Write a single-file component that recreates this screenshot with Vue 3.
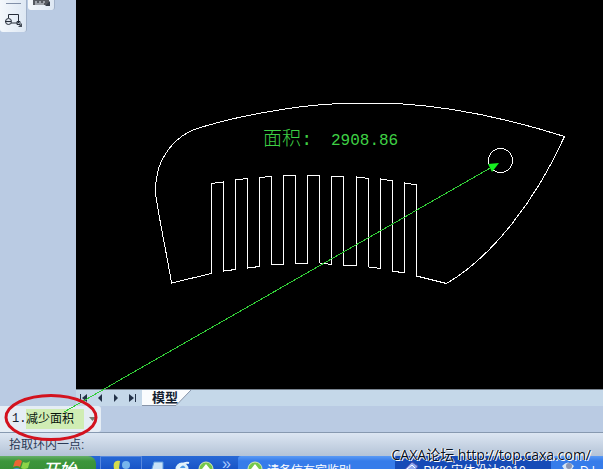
<script setup>
const navButtons = [
  { label: 'First sheet', bar: 3, arrow: '10,3 10,11 5,7' },
  { label: 'Previous sheet', bar: null, arrow: '9,3 9,11 5,7' },
  { label: 'Next sheet', bar: null, arrow: '5,3 5,11 9,7' },
  { label: 'Last sheet', bar: 10, arrow: '4,3 4,11 9,7' },
]

// Comb outline: left end, upper back, right edge, then the teeth from right to left.
const outline =
  'M171.5 283 C168 260 160 225 155.5 193 C155 182 157 175 159 167 C166 149 177 137 193 130 ' +
  'C231 117 295 105 341 103.5 H397 C440 106 500 116 564.5 136.5 ' +
  'C536 200 492 257 446.5 283.5 L416.5 276 V185 L404.5 183 V273 L392.5 271 V181 L380.5 179 V268.5 ' +
  'L368.5 267 V178.5 L356.5 177 V265.5 H343.5 V176.5 H331.5 V264.5 L319.5 263 V175.5 H307.5 V263.5 H295.5 V175.5 ' +
  'L283.5 176 V264.5 L271.5 265 V176.5 L259.5 177.5 V266.5 L247.5 268 V178.5 L235.5 180 V269.5 L223.5 271 V182 ' +
  'L211.5 183.5 V273.5 Z'
</script>

<template>
  <main class="app">
    <div class="workspace">
      <aside class="sidebar">
        <div class="toolbox">
          <hr class="divider" />
          <button class="tool" aria-label="Block tool">
            <svg width="24" height="18" viewBox="0 0 24 18">
              <path d="M8.5 8V4.5h10V13H11" fill="none" stroke="#252c38" />
              <circle cx="8.5" cy="11.5" r="3" fill="#dce3ec" stroke="#252c38" />
              <path d="M5 11.5h6M17 11.5h3v3h-3z" fill="none" stroke="#252c38" />
              <path d="M22 13v4h-4z" fill="#454c57" />
            </svg>
          </button>
        </div>
        <div class="toolbox small">
          <button class="tool" aria-label="Dimension tool">
            <svg width="20" height="8" viewBox="0 0 20 8">
              <path d="M1 0h16v5H1z" fill="#555960" />
              <path d="M3 2h2M7 2h2M11 2h2M3 4h9" stroke="#e7edf4" />
              <path d="M18 1v5h-5z" fill="#343b46" />
            </svg>
          </button>
        </div>
      </aside>
      <section class="canvas">
        <svg class="drawing" width="527" height="389" viewBox="76 0 527 389">
          <g fill="none" stroke="#fff" shape-rendering="crispEdges">
            <path :d="outline" />
            <circle cx="500.5" cy="160.5" r="12" />
          </g>
          <text x="263" y="145" class="cad cad-label">面积:</text>
          <text x="331" y="145" class="cad cad-value">2908.86</text>
        </svg>
      </section>
    </div>

    <nav class="sheets">
      <button v-for="b in navButtons" :key="b.label" class="nav" :aria-label="b.label">
        <svg width="14" height="14" viewBox="0 0 14 14">
          <path v-if="b.bar" :d="`M${b.bar + 0.5} 3v8`" stroke="#233248" />
          <polygon :points="b.arrow" fill="#233248" />
        </svg>
      </button>
      <button class="sheet">
        <svg class="sheet-shape" width="50" height="17" viewBox="0 0 50 17">
          <path d="M0 0H49L34 15.5H0z" fill="#fafcfe" />
          <path d="M49 0L34 15.5H0" fill="none" stroke="#8794a8" />
        </svg>
        <span>模型</span>
      </button>
    </nav>

    <div class="options">
      <div class="option">
        <label for="area-mode">1.</label>
        <select id="area-mode"><option>减少面积</option></select>
        <svg class="caret" width="7" height="4" viewBox="0 0 7 4"><path d="M0 0h7L3.5 4z" fill="#777b72" /></svg>
      </div>
    </div>

    <div class="status">拾取环内一点:</div>

    <footer class="taskbar">
      <button class="start">
        <svg width="20" height="18" viewBox="0 0 20 18">
          <path d="M3 2q4-3 7 0L8 8Q5 6 1 8z" fill="#ec6534" />
          <path d="M11 3q4 2 7-1l-2 7q-4 2-7 0z" fill="#8bd447" />
          <path d="M1 10q4-2 7 0l-2 6q-3-2-7 0z" fill="#4d94eb" />
          <path d="M9 11q4 2 7 0l-2 6q-4 2-7 0z" fill="#f5cd3a" />
        </svg>
        <span>开始</span>
      </button>
      <div class="quick">
        <button class="ql" aria-label="Messenger">
          <svg width="18" height="16" viewBox="0 0 18 16">
            <path d="M7 1C1 0 0 4 1 9l4 6h4L6 8z" fill="#d3dc4e" />
            <circle cx="13" cy="5" r="4" fill="#76b5ed" />
            <path d="M8 10h9v6H8z" fill="#76b5ed" />
          </svg>
        </button>
      </div>
      <div class="quick icons">
        <button class="ql" aria-label="Desktop">
          <svg width="16" height="16" viewBox="0 0 16 16"><path d="M4 1h9v9l-4 5-8-4z" fill="#c7e1f7" stroke="#5c9bdd" /></svg>
        </button>
        <button class="ql" aria-label="Browser">
          <svg width="16" height="16" viewBox="0 0 16 16"><circle cx="8" cy="8" r="5" fill="#4b9ae6" stroke="#d9effa" stroke-width="3" /><path d="M1 12Q8 0 15 2M5 8h7" fill="none" stroke="#e5f3fc" stroke-width="2" /></svg>
        </button>
        <button class="ql" aria-label="Security">
          <svg width="16" height="16" viewBox="0 0 16 16"><circle cx="8" cy="8" r="7" fill="#75c84b" stroke="#d8edb2" /><path d="M8 3l4 5h-2v5H6V8H4z" fill="#fff" /></svg>
        </button>
        <span class="more">»</span>
      </div>
      <button class="task">
        <svg width="16" height="16" viewBox="0 0 16 16"><circle cx="8" cy="8" r="7" fill="#75c84b" stroke="#d8edb2" /><path d="M8 3l4 5h-2v5H6V8H4z" fill="#fff" /></svg>
        <span>请务信有宾监别</span>
      </button>
      <button class="task dark">
        <svg width="16" height="16" viewBox="0 0 16 16"><path d="M1 8l7-7 6 4-5 9z" fill="#8da8ed" stroke="#4d4fae" /><path d="M3 8l5-4 3 3" fill="none" stroke="#fff" /></svg>
        <span>PKK 宋体设计2010</span>
      </button>
      <button class="task last">
        <svg width="16" height="16" viewBox="0 0 16 16"><path d="M2 5q6-7 12 0l-6 9z" fill="#d6e4f3" /><circle cx="9" cy="5" r="3" fill="#8895b4" /></svg>
        <span>D.l</span>
      </button>
    </footer>

    <svg class="annotation" width="603" height="469" viewBox="0 0 603 469">
      <path d="M64 412L492 167" stroke="#32cf38" shape-rendering="crispEdges" />
      <polygon points="499,163 492,172 488,164" fill="#16ef20" />
      <ellipse cx="51" cy="417.5" rx="45" ry="22" fill="none" stroke="#d3121e" stroke-width="3" />
    </svg>
    <a class="watermark" href="http://top.caxa.com/">CAXA论坛 http://top.caxa.com/</a>
  </main>
</template>

<style>
body { margin: 0; }
</style>

<style scoped>
* { box-sizing: border-box; }
button, select { font: inherit; margin: 0; padding: 0; border: 0; background: none; border-radius: 0; color: inherit; }
svg { display: block; flex: none; }
.app {
  position: relative;
  display: flex;
  flex-direction: column;
  height: 100vh;
  overflow: hidden;
  background: #bacbe3;
  color: #14202f;
  font: 12px/16px "Liberation Sans", "Noto Sans CJK SC", sans-serif;
}
.workspace { display: flex; flex: 1; min-height: 0; }
.sidebar { display: flex; align-items: flex-start; gap: 1px; width: 76px; flex: none; }
.toolbox { width: 27px; height: 32px; background: linear-gradient(90deg, #f4f8fc, #dde7f3); border-right: 1px solid #a2b2ca; border-radius: 0 0 3px 3px; }
.toolbox.small { height: 10px; padding-left: 4px; }
.divider { width: 15px; margin: 3px auto 6px; border: 0; border-top: 1px solid #8290a8; }
.tool { display: block; }
.canvas { flex: 1; min-width: 0; overflow: hidden; background: #000; }
.cad { fill: #3fd045; font-weight: 300; }
.cad-label { font-size: 19px; font-family: "Liberation Mono", "Noto Sans CJK SC", monospace; }
.cad-value { font-size: 16px; font-family: "Liberation Mono", monospace; }
.sheets { display: flex; height: 17px; flex: none; margin-left: 76px; background: #c5d8e9; border-top: 1px solid #78838f; }
.nav { display: grid; place-items: center; width: 16px; height: 16px; }
.sheet { position: relative; width: 50px; height: 16px; margin-left: 2px; font-size: 13px; font-weight: 700; }
.sheet-shape { position: absolute; inset: 0; }
.sheet span { position: relative; display: block; padding-right: 4px; }
.options { height: 26px; flex: none; }
.option { display: flex; align-items: center; gap: 1px; width: 101px; height: 26px; padding-left: 12px; background: #e5edf5; border-radius: 0 3px 3px 0; }
.option label { width: 13px; font-family: "Liberation Mono", monospace; }
.option select { appearance: none; width: 58px; height: 20px; background: #d0edb4; color: #07140b; }
.caret { margin-left: 4px; }
.status { height: 24px; flex: none; padding: 4px 9px; border-top: 1px solid #8799b0; background: linear-gradient(#dce6f2, #b4c3d7); color: #2b3a56; }
.taskbar { display: flex; height: 13px; flex: none; overflow: hidden; background: linear-gradient(#2869d6, #1854c7); color: #fff; }
.start { display: flex; gap: 10px; width: 96px; height: 30px; padding: 3px 0 0 12px; border-radius: 0 8px 8px 0; background: linear-gradient(#67b069, #3c963b 5px, #2f842f); font: italic 500 17px/20px "Noto Sans CJK SC", sans-serif; flex: none; }
.quick { width: 42px; height: 30px; padding: 3px 0 0 12px; border: 1px solid #5687de; margin-left: 4px; flex: none; }
.quick.icons { display: flex; gap: 8px; width: 96px; margin: 0; padding: 5px 0 0 8px; border: 0; }
.ql { display: block; height: 16px; }
.more { margin-top: -3px; font-size: 16px; line-height: 12px; color: #a9caff; }
.task { display: flex; gap: 4px; flex: 158 1 0; min-width: 0; height: 30px; padding: 5px 0 0 9px; border-radius: 3px 0 0; background: linear-gradient(#5a9af5, #367cea 5px); white-space: nowrap; overflow: hidden; }
.task span { padding-top: 2px; }
.task.dark { background: #164bb7; }
.task.last { flex-grow: 46; }
.annotation { position: absolute; top: 0; left: 0; pointer-events: none; }
.watermark { position: absolute; right: 12px; bottom: 4px; color: #07101d; text-decoration: none; font: 14px/20px "Open Sans", "Noto Sans CJK SC", sans-serif; text-shadow: 1px 1px #fff, -1px 0 #fff; }
</style>
